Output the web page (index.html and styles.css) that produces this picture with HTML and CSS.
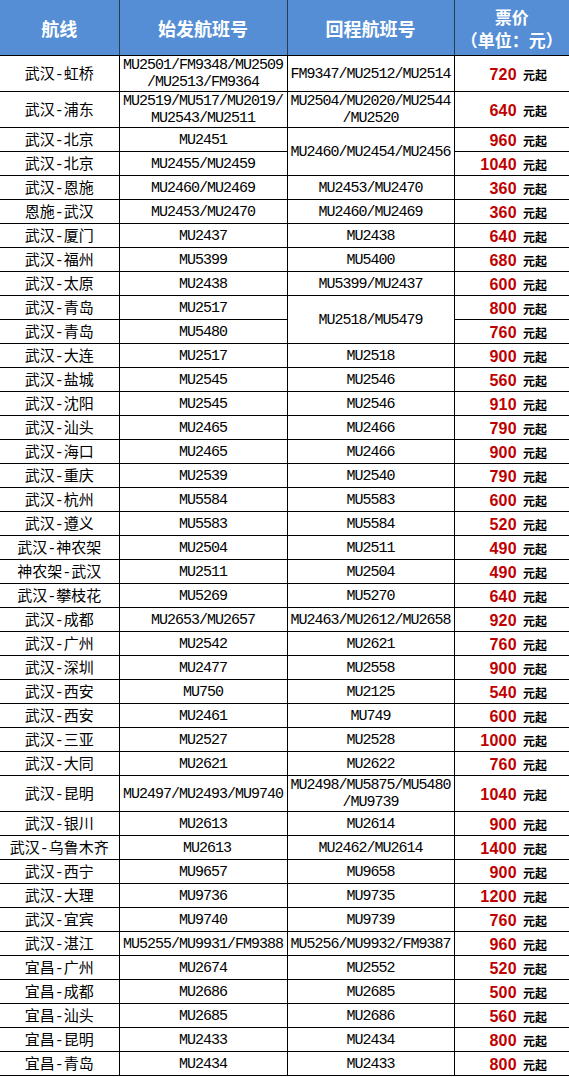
FILE: index.html
```html
<!DOCTYPE html>
<html lang="zh-CN">
<head>
<meta charset="utf-8">
<title>航线</title>
<link rel="stylesheet" href="styles.css">
</head>
<body>
<table class="fares">
<colgroup><col class="c1"><col class="c2"><col class="c3"><col class="c4"></colgroup>
<thead>
<tr class="head"><th>航线</th><th>始发航班号</th><th>回程航班号</th><th class="hp">票价<br>（单位：元）</th></tr>
</thead>
<tbody>
<tr class="tall"><td class="r">武汉<span class="h">-</span>虹桥</td><td class="f">MU2501/FM9348/MU2509<br>/MU2513/FM9364</td><td class="f">FM9347/MU2512/MU2514</td><td class="p"><b>720</b><i>元起</i></td></tr>
<tr class="tall"><td class="r">武汉<span class="h">-</span>浦东</td><td class="f">MU2519/MU517/MU2019/<br>MU2543/MU2511</td><td class="f">MU2504/MU2020/MU2544<br>/MU2520</td><td class="p"><b>640</b><i>元起</i></td></tr>
<tr><td class="r">武汉<span class="h">-</span>北京</td><td class="f">MU2451</td><td class="f" rowspan="2">MU2460/MU2454/MU2456</td><td class="p"><b>960</b><i>元起</i></td></tr>
<tr><td class="r">武汉<span class="h">-</span>北京</td><td class="f">MU2455/MU2459</td><td class="p"><b>1040</b><i>元起</i></td></tr>
<tr><td class="r">武汉<span class="h">-</span>恩施</td><td class="f">MU2460/MU2469</td><td class="f">MU2453/MU2470</td><td class="p"><b>360</b><i>元起</i></td></tr>
<tr><td class="r">恩施<span class="h">-</span>武汉</td><td class="f">MU2453/MU2470</td><td class="f">MU2460/MU2469</td><td class="p"><b>360</b><i>元起</i></td></tr>
<tr><td class="r">武汉<span class="h">-</span>厦门</td><td class="f">MU2437</td><td class="f">MU2438</td><td class="p"><b>640</b><i>元起</i></td></tr>
<tr><td class="r">武汉<span class="h">-</span>福州</td><td class="f">MU5399</td><td class="f">MU5400</td><td class="p"><b>680</b><i>元起</i></td></tr>
<tr><td class="r">武汉<span class="h">-</span>太原</td><td class="f">MU2438</td><td class="f">MU5399/MU2437</td><td class="p"><b>600</b><i>元起</i></td></tr>
<tr><td class="r">武汉<span class="h">-</span>青岛</td><td class="f">MU2517</td><td class="f" rowspan="2">MU2518/MU5479</td><td class="p"><b>800</b><i>元起</i></td></tr>
<tr><td class="r">武汉<span class="h">-</span>青岛</td><td class="f">MU5480</td><td class="p"><b>760</b><i>元起</i></td></tr>
<tr><td class="r">武汉<span class="h">-</span>大连</td><td class="f">MU2517</td><td class="f">MU2518</td><td class="p"><b>900</b><i>元起</i></td></tr>
<tr><td class="r">武汉<span class="h">-</span>盐城</td><td class="f">MU2545</td><td class="f">MU2546</td><td class="p"><b>560</b><i>元起</i></td></tr>
<tr><td class="r">武汉<span class="h">-</span>沈阳</td><td class="f">MU2545</td><td class="f">MU2546</td><td class="p"><b>910</b><i>元起</i></td></tr>
<tr><td class="r">武汉<span class="h">-</span>汕头</td><td class="f">MU2465</td><td class="f">MU2466</td><td class="p"><b>790</b><i>元起</i></td></tr>
<tr><td class="r">武汉<span class="h">-</span>海口</td><td class="f">MU2465</td><td class="f">MU2466</td><td class="p"><b>900</b><i>元起</i></td></tr>
<tr><td class="r">武汉<span class="h">-</span>重庆</td><td class="f">MU2539</td><td class="f">MU2540</td><td class="p"><b>790</b><i>元起</i></td></tr>
<tr><td class="r">武汉<span class="h">-</span>杭州</td><td class="f">MU5584</td><td class="f">MU5583</td><td class="p"><b>600</b><i>元起</i></td></tr>
<tr><td class="r">武汉<span class="h">-</span>遵义</td><td class="f">MU5583</td><td class="f">MU5584</td><td class="p"><b>520</b><i>元起</i></td></tr>
<tr><td class="r">武汉<span class="h">-</span>神农架</td><td class="f">MU2504</td><td class="f">MU2511</td><td class="p"><b>490</b><i>元起</i></td></tr>
<tr><td class="r">神农架<span class="h">-</span>武汉</td><td class="f">MU2511</td><td class="f">MU2504</td><td class="p"><b>490</b><i>元起</i></td></tr>
<tr><td class="r">武汉<span class="h">-</span>攀枝花</td><td class="f">MU5269</td><td class="f">MU5270</td><td class="p"><b>640</b><i>元起</i></td></tr>
<tr><td class="r">武汉<span class="h">-</span>成都</td><td class="f">MU2653/MU2657</td><td class="f">MU2463/MU2612/MU2658</td><td class="p"><b>920</b><i>元起</i></td></tr>
<tr><td class="r">武汉<span class="h">-</span>广州</td><td class="f">MU2542</td><td class="f">MU2621</td><td class="p"><b>760</b><i>元起</i></td></tr>
<tr><td class="r">武汉<span class="h">-</span>深圳</td><td class="f">MU2477</td><td class="f">MU2558</td><td class="p"><b>900</b><i>元起</i></td></tr>
<tr><td class="r">武汉<span class="h">-</span>西安</td><td class="f">MU750</td><td class="f">MU2125</td><td class="p"><b>540</b><i>元起</i></td></tr>
<tr><td class="r">武汉<span class="h">-</span>西安</td><td class="f">MU2461</td><td class="f">MU749</td><td class="p"><b>600</b><i>元起</i></td></tr>
<tr><td class="r">武汉<span class="h">-</span>三亚</td><td class="f">MU2527</td><td class="f">MU2528</td><td class="p"><b>1000</b><i>元起</i></td></tr>
<tr><td class="r">武汉<span class="h">-</span>大同</td><td class="f">MU2621</td><td class="f">MU2622</td><td class="p"><b>760</b><i>元起</i></td></tr>
<tr class="tall"><td class="r">武汉<span class="h">-</span>昆明</td><td class="f">MU2497/MU2493/MU9740</td><td class="f">MU2498/MU5875/MU5480<br>/MU9739</td><td class="p"><b>1040</b><i>元起</i></td></tr>
<tr><td class="r">武汉<span class="h">-</span>银川</td><td class="f">MU2613</td><td class="f">MU2614</td><td class="p"><b>900</b><i>元起</i></td></tr>
<tr><td class="r">武汉<span class="h">-</span>乌鲁木齐</td><td class="f">&nbsp;MU2613</td><td class="f">MU2462/MU2614</td><td class="p"><b>1400</b><i>元起</i></td></tr>
<tr><td class="r">武汉<span class="h">-</span>西宁</td><td class="f">MU9657</td><td class="f">MU9658</td><td class="p"><b>900</b><i>元起</i></td></tr>
<tr><td class="r">武汉<span class="h">-</span>大理</td><td class="f">MU9736</td><td class="f">MU9735</td><td class="p"><b>1200</b><i>元起</i></td></tr>
<tr><td class="r">武汉<span class="h">-</span>宜宾</td><td class="f">MU9740</td><td class="f">MU9739</td><td class="p"><b>760</b><i>元起</i></td></tr>
<tr><td class="r">武汉<span class="h">-</span>湛江</td><td class="f">MU5255/MU9931/FM9388</td><td class="f">MU5256/MU9932/FM9387</td><td class="p"><b>960</b><i>元起</i></td></tr>
<tr><td class="r">宜昌<span class="h">-</span>广州</td><td class="f">MU2674</td><td class="f">MU2552</td><td class="p"><b>520</b><i>元起</i></td></tr>
<tr><td class="r">宜昌<span class="h">-</span>成都</td><td class="f">MU2686</td><td class="f">MU2685</td><td class="p"><b>500</b><i>元起</i></td></tr>
<tr><td class="r">宜昌<span class="h">-</span>汕头</td><td class="f">MU2685</td><td class="f">MU2686</td><td class="p"><b>560</b><i>元起</i></td></tr>
<tr><td class="r">宜昌<span class="h">-</span>昆明</td><td class="f">MU2433</td><td class="f">MU2434</td><td class="p"><b>800</b><i>元起</i></td></tr>
<tr><td class="r">宜昌<span class="h">-</span>青岛</td><td class="f">MU2434</td><td class="f">MU2433</td><td class="p"><b>800</b><i>元起</i></td></tr>
</tbody>
</table>
</body>
</html>
```
FILE: styles.css
```css
html, body {
  margin: 0;
  padding: 0;
  background: #ffffff;
}

.fares {
  width: 569px;
  table-layout: fixed;
  border-collapse: collapse;
  border-spacing: 0;
  font-family: "Noto Sans CJK SC", "Noto Sans", sans-serif;
  font-size: 15px;
  line-height: 16px;
  color: #000;
}

.c1 { width: 119px; }
.c2 { width: 168px; }
.c3 { width: 167px; }
.c4 { width: 115px; }

.fares th,
.fares td {
  padding: 0;
  border-bottom: 1px solid #000;
  border-right: 1px solid #000;
  text-align: center;
  vertical-align: middle;
  white-space: nowrap;
  overflow: hidden;
}

.fares th:last-child,
.fares td:last-child {
  border-right: none;
}

.head th {
  height: 55px;
  background: #558ED5;
  color: #ffffff;
  font-weight: 700;
  font-size: 18px;
  line-height: 22px;
  border-right-color: #2c3a4d;
}

.head .hp {
  font-size: 17px;
  line-height: 23px;
}

.fares tbody tr {
  height: 24px;
}

.fares tbody tr.tall {
  height: 36px;
}

.fares tbody td {
  height: 21px;
  padding-top: 2px;
}

.fares tbody tr.tall td {
  height: 34px;
  padding-top: 1px;
}

.r {
  font-size: 15px;
  line-height: 16px;
  font-weight: 400;
}

.h {
  font-family: "Liberation Mono", monospace;
  font-size: 15px;
  line-height: 16px;
}

.f {
  font-family: "Liberation Mono", "DejaVu Sans Mono", monospace;
  font-size: 15px;
  letter-spacing: -1px;
  line-height: 17px;
}

.p {
  text-align: right !important;
  padding-right: 22px !important;
  line-height: 16px;
}

.p b {
  font-family: "Liberation Sans", Arial, sans-serif;
  font-weight: 700;
  font-size: 16px;
  line-height: 16px;
  color: #C00000;
  letter-spacing: 0.3px;
}

.p i {
  font-style: normal;
  font-weight: 700;
  font-size: 12px;
  line-height: 12px;
  margin-left: 6px;
  font-family: "Noto Sans CJK SC", sans-serif;
}
```
